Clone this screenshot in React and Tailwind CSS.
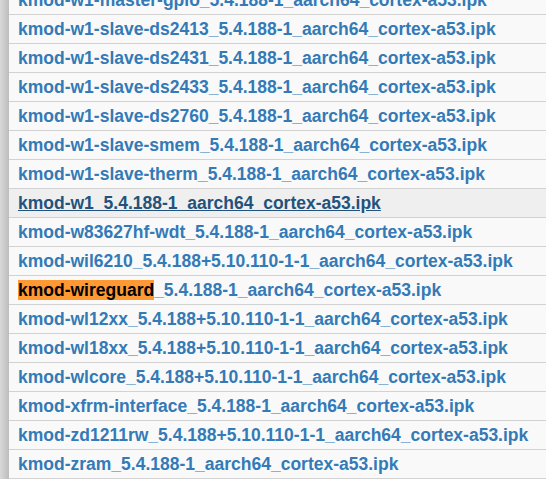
const rows = [
  "kmod-w1-master-gpio_5.4.188-1_aarch64_cortex-a53.ipk",
  "kmod-w1-slave-ds2413_5.4.188-1_aarch64_cortex-a53.ipk",
  "kmod-w1-slave-ds2431_5.4.188-1_aarch64_cortex-a53.ipk",
  "kmod-w1-slave-ds2433_5.4.188-1_aarch64_cortex-a53.ipk",
  "kmod-w1-slave-ds2760_5.4.188-1_aarch64_cortex-a53.ipk",
  "kmod-w1-slave-smem_5.4.188-1_aarch64_cortex-a53.ipk",
  "kmod-w1-slave-therm_5.4.188-1_aarch64_cortex-a53.ipk",
  "kmod-w1_5.4.188-1_aarch64_cortex-a53.ipk",
  "kmod-w83627hf-wdt_5.4.188-1_aarch64_cortex-a53.ipk",
  "kmod-wil6210_5.4.188+5.10.110-1-1_aarch64_cortex-a53.ipk",
  "kmod-wireguard_5.4.188-1_aarch64_cortex-a53.ipk",
  "kmod-wl12xx_5.4.188+5.10.110-1-1_aarch64_cortex-a53.ipk",
  "kmod-wl18xx_5.4.188+5.10.110-1-1_aarch64_cortex-a53.ipk",
  "kmod-wlcore_5.4.188+5.10.110-1-1_aarch64_cortex-a53.ipk",
  "kmod-xfrm-interface_5.4.188-1_aarch64_cortex-a53.ipk",
  "kmod-zd1211rw_5.4.188+5.10.110-1-1_aarch64_cortex-a53.ipk",
  "kmod-zram_5.4.188-1_aarch64_cortex-a53.ipk",
];

const hovered = "kmod-w1_5.4.188-1_aarch64_cortex-a53.ipk";
const search = "kmod-wireguard";

function FileLink({ name }) {
  if (name === hovered) {
    return <a className="text-[#23527c] underline">{name}</a>;
  }
  if (name.startsWith(search)) {
    return (
      <a className="text-[#337ab7]">
        <span className="bg-[#ff9933] text-black">{search}</span>
        {name.slice(search.length)}
      </a>
    );
  }
  return <a className="text-[#337ab7]">{name}</a>;
}

export default function App() {
  return (
    <div
      className="flex h-[479px] w-[546px] overflow-hidden bg-[#f9f9f9]"
      style={{ fontFamily: '"Liberation Sans", Arial, sans-serif' }}
    >
      <div className="w-[9px] shrink-0 bg-gradient-to-r from-[#d9d9d9] to-[#bdbdbd]" />
      <div className="flex flex-1 flex-col -mt-[14px]">
        {rows.map((name) => (
          <div
            key={name}
            className={`flex h-[29px] shrink-0 items-center border-b border-[#d2d2d2] pl-[9px] text-[17.5px] font-bold whitespace-nowrap ${
              name === hovered ? "bg-[#efefef]" : ""
            }`}
          >
            <FileLink name={name} />
          </div>
        ))}
      </div>
    </div>
  );
}
